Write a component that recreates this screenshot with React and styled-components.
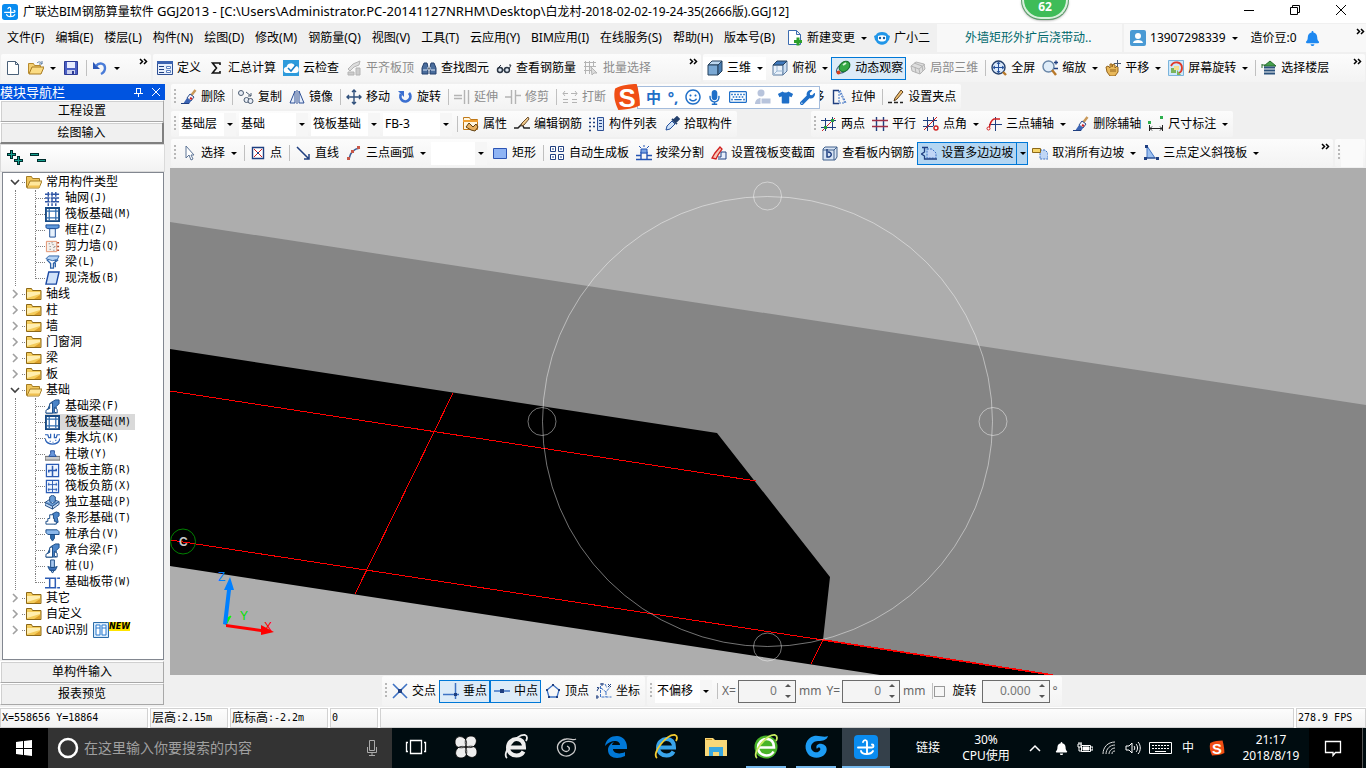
import React from "react";
import styled, { createGlobalStyle, css } from "styled-components";
import {
  FaRegSmile,
  FaMicrophone,
  FaRegKeyboard,
  FaTshirt,
  FaWrench,
  FaBell,
} from "react-icons/fa";

const NAVY = "#1f3f80";
const BLUE = "#3f73c4";
const RED = "#d02020";
const GREY = "#b4b4b4";

/* 16x16 toolbar and tree drawings */
const drawings = {
  doc: (
    <path d="M2.5 1.5h8l3 3v10h-11zM10.5 1.5v3h3" fill="#fff" stroke="#4a6078" />
  ),
  open: (
    <>
      <path d="M.5 13.5v-10h5l1 2h6v3" fill="#f3cf72" stroke="#b88a2c" />
      <path d="M1 14l3-7h12l-3 7z" fill="#fbdc84" stroke="#a87a20" />
      <path d="M9 3c2-2 4-1 5 1m0-3v3h-3" fill="none" stroke="#5b7ba0" />
    </>
  ),
  openFolder: (
    <>
      <path d="M.5 13.5v-11h5l1 2h7v3" fill="#f0c65c" stroke="#a47c24" />
      <path d="M1 14l3-7h12l-3 7z" fill="#ffe79c" stroke="#a47c24" />
      <path d="M2 13.5l1-2h11l-1 2z" fill="#f0c050" />
    </>
  ),
  save: (
    <>
      <path d="M1.5 1.5h13v13h-13z" fill="#4a5fc4" stroke="#2c3a94" />
      <path d="M4 2h8v6H4z" fill="#e8ecff" />
      <path d="M4 10h8v4H4z" fill="#c9d0ee" />
      <path d="M9 11h2v3H9z" fill="#2c3a94" />
    </>
  ),
  undo: (
    <>
      <path d="M1 2v7h7z" fill="#2c58b8" />
      <path d="M4 6c3-4 9-3 9 2 0 3-2 5-4 6" fill="none" stroke="#4a7cd8" strokeWidth="2.4" />
    </>
  ),
  define: (
    <>
      <path d="M.5 1.5h15v13H.5z" fill="#e6eefb" stroke="#2d4f94" />
      <path d="M0 1h16v3H0z" fill="#3c63b0" />
      <path d="M2 6.5h5M2 9.5h5M2 12.5h5" stroke={NAVY} />
      <path d="M9.5 6.5h4v2h-4zM9.5 10.5h4v2h-4z" fill="#fff" stroke="#5c80c0" />
    </>
  ),
  sigma: (
    <path d="M12 5V3H4.5l4 5-4 5H12v-2" fill="none" stroke="#111" strokeWidth="1.6" />
  ),
  cloud: (
    <>
      <path d="M0 0h16v16H0z" fill="#2e9bdc" />
      <path d="M4 13a3 3 0 0 1-.5-6A4.5 4.5 0 0 1 12 6a3.5 3.5 0 0 1 .5 7z" fill="#fff" />
      <path d="M5 8l3 3 5-6" fill="none" stroke="#1b80c8" strokeWidth="1.6" />
    </>
  ),
  flush: (
    <>
      <path d="M2 9l5-5 7-3-1 4-5 2-4 4z" fill="#ddd" stroke={GREY} />
      <path d="M2 12h6v3H2zM10 8h4v7h-4z" fill="#ccc" stroke={GREY} />
    </>
  ),
  binocular: (
    <>
      <path d="M1 14V8l2-5h3l1 4v7H1zM15 14V8l-2-5h-3L9 7v7h6z" fill="#4a6d9c" stroke="#24406c" />
      <path d="M7 7h2v3H7zM2 10h4m4 0h4" stroke="#dce8f8" />
    </>
  ),
  glasses: (
    <>
      <circle cx="4" cy="10" r="2.5" fill="#dce6f0" stroke="#2a3442" strokeWidth="1.5" />
      <circle cx="11" cy="10" r="2.5" fill="#dce6f0" stroke="#2a3442" strokeWidth="1.5" />
      <path d="M6.5 10h2M13 9l2-4h-2M2 8l3-3" fill="none" stroke="#2a3442" />
    </>
  ),
  batch: (
    <>
      <path d="M1 2.5h12M1 6.5h12M1 10.5h7M2.5 1v13M6.5 1v13M10.5 1v5" stroke={GREY} />
      <path d="M8 7l6 6h-3l-2 2z" fill="#ddd" stroke={GREY} />
    </>
  ),
  cube: (
    <>
      <path d="M1 5l4-4h10l-4 4z" fill="#bcd7f0" stroke="#24405c" />
      <path d="M1 5h10v10H1z" fill="#7ba9d4" stroke="#24405c" />
      <path d="M11 5l4-4v10l-4 4z" fill="#4a7db0" stroke="#24405c" />
    </>
  ),
  cubeTop: (
    <>
      <path d="M1 5h10v10H1z" fill="#e9f1fa" stroke="#5b7ba0" />
      <path d="M11 5l4-4v10l-4 4z" fill="#cfe0f2" stroke="#5b7ba0" />
      <path d="M5 5v6h6M1 15l4-4" fill="none" stroke="#9cb8d4" />
      <path d="M1 5l4-4h10l-4 4z" fill="#3f78bc" stroke="#24405c" />
    </>
  ),
  orbit: (
    <>
      <ellipse cx="8" cy="8" rx="7.5" ry="4" transform="rotate(-35 8 8)" fill="none" stroke="#3a5d80" />
      <ellipse cx="9.5" cy="6.5" rx="6" ry="4.5" transform="rotate(-40 9.5 6.5)" fill="#35a845" stroke="#16702a" />
      <path d="M8 5l3-2" stroke="#d4f5d4" strokeWidth="2" />
      <circle cx="3.5" cy="12.5" r="2" fill="#d24020" />
    </>
  ),
  cubes: (
    <>
      <path d="M1 6l5-4 8 2 1 5-5 5-8-3z" fill="#dedede" stroke={GREY} />
      <path d="M1 6l8 3 6-5M9 9l1 5M5 7l1 6M4 3l8 3 1 5" fill="none" stroke={GREY} />
    </>
  ),
  fullscreen: (
    <>
      <circle cx="7.5" cy="7.5" r="6.5" fill="#dceafa" stroke="#24406c" strokeWidth="1.4" />
      <path d="M7.5 2.5v10M2.5 7.5h10M6 4l1.5-2L9 4M6 11l1.5 2L9 11M4 6L2 7.5 4 9M11 6l2 1.5L11 9" fill="none" stroke="#24509c" />
      <path d="M12 12l3 3" stroke="#b87828" strokeWidth="2.4" />
    </>
  ),
  zoom: (
    <>
      <circle cx="6.5" cy="6.5" r="5.5" fill="#dfecf8" stroke="#6a87a8" strokeWidth="1.4" />
      <path d="M10 10l4 5" stroke="#b87828" strokeWidth="2.4" />
      <path d="M12 2.5h4M14 .5v4M12 8.5h4" stroke={NAVY} strokeWidth="1.3" />
    </>
  ),
  pan: (
    <>
      <path d="M1 7l2-1 2 2V4h2v3l1-3 2 1v3l2-2 1 1v5l-3 4H5l-3-4z" fill="#e8b85a" stroke="#94641c" />
      <path d="M12.5 0v7M9 3.5h7" stroke="#4a5a70" />
      <path d="M6 9v3m2-3v3m2-3v3" stroke="#94641c" />
    </>
  ),
  screenRotate: (
    <>
      <path d="M.5 .5h15v15H.5z" fill="#cfe8fa" stroke="#7ab4dc" />
      <path d="M3 6c3-6 11-4 11 2 0 2-1 4-3 5" fill="none" stroke="#e03a28" strokeWidth="1.8" />
      <path d="M3 8h5v5H3zM9 10v5h4z" fill="#7cb45a" />
      <path d="M6 6h5v4H6z" fill="#f5e08c" />
    </>
  ),
  floors: (
    <>
      <path d="M3 6L9 1l6 5z" fill="#46a04c" stroke="#246c2c" />
      <path d="M3 7.5h11M3 10.5h11M3 13.5h11" stroke="#2b527c" strokeWidth="1.8" />
      <path d="M1 5h3M1 4v4" fill="none" stroke="#246c2c" />
    </>
  ),
  brush: (
    <>
      <path d="M14.5 1L9 8" stroke="#c89858" strokeWidth="2.5" />
      <path d="M9 5l4 3-3 4-4-3z" fill="#f4f4fa" stroke="#2b4c8c" />
      <path d="M6 9l4 3-2 3H2z" fill="#3b64b4" />
      <path d="M9 9l2 1" stroke={RED} strokeWidth="2" />
      <path d="M0 14.5h8" stroke={NAVY} />
    </>
  ),
  copy: (
    <>
      <circle cx="3" cy="4" r="2.5" fill="#e8edf5" stroke="#4a5a70" />
      <circle cx="8.5" cy="11" r="2.5" fill="#e8edf5" stroke="#4a5a70" />
      <circle cx="12.5" cy="12" r="2.5" fill="#e8edf5" stroke="#4a5a70" />
      <path d="M8 3l5 4m0-3v3h-3" fill="none" stroke="#4a5a70" />
    </>
  ),
  mirror: (
    <path d="M6 2v12H1zM10 2v12h5zM8 1v14" fill="#e6eefb" stroke="#2d4f94" />
  ),
  move: (
    <path
      d="M8 1v14M1 8h14M6 3l2-2 2 2M6 13l2 2 2-2M3 6L1 8l2 2M13 6l2 2-2 2"
      fill="none"
      stroke="#31517c"
      strokeWidth="1.4"
    />
  ),
  rotate: (
    <>
      <path d="M4 5a5 5 0 1 0 8-1" fill="none" stroke="#3b6fd0" strokeWidth="2.8" />
      <path d="M1 2h6v6z" fill="#3b6fd0" />
    </>
  ),
  extend: (
    <path d="M0 6.5h8M0 9.5h8M10.5 1v14M14.5 1v14" stroke={GREY} strokeWidth="1.4" />
  ),
  trim: (
    <path d="M0 8h6M6.5 1v14M10.5 1v14M11 6.5h5" stroke={GREY} strokeWidth="1.4" />
  ),
  breakLine: (
    <path d="M1 4.5h5m3 0h6M3 2L1 4.5 3 7M13 2l2 2.5L13 7M1 10.5h5m4 0h5M1 13.5h5m4 0h5" fill="none" stroke={GREY} />
  ),
  stretch: (
    <>
      <path d="M8 1.5H2.5v13H8" fill="none" stroke={NAVY} strokeWidth="1.4" />
      <path d="M8 2v12h6zM9 1l6 13" fill="none" stroke={BLUE} strokeDasharray="2 1" />
    </>
  ),
  grip: (
    <>
      <path d="M13 1L7 9l-1 3 3-2 6-7z" fill="#f0c070" stroke="#5c4020" />
      <path d="M0 13.5h4m2 0h4m2 0h3" stroke="#222" strokeWidth="1.5" />
    </>
  ),
  property: (
    <>
      <path d="M.5 3.5v-2h6l1 2h7v10H.5z" fill="#fff6e0" stroke="#c07818" />
      <path d="M0 4h15v2H0z" fill="#f0a030" />
      <path d="M3 11l3-4 4 4 3-3 2 3-3 4-4-1z" fill="#e8b060" stroke="#604010" />
    </>
  ),
  editBar: (
    <>
      <path d="M0 12h4l4-4 2 4h6" fill="none" stroke="#222" strokeWidth="1.5" />
      <path d="M14 1L8 7l-1 3 3-1 5-6z" fill="#f0c888" stroke="#6c5030" />
    </>
  ),
  list: (
    <>
      <path d="M0 2.5h2M0 6.5h2M0 10.5h2M0 14.5h2M4 2.5h2M4 6.5h2M4 10.5h2" stroke={NAVY} strokeWidth="1.4" />
      <path d="M8.5 1.5h6v13h-6z" fill="#d4e2f6" stroke="#2d4f94" />
      <path d="M10 4.5h3M10 7.5h3M10 10.5h3" stroke={NAVY} />
    </>
  ),
  dropper: (
    <>
      <path d="M2 14l1-4 5-5 3 3-5 5z" fill="#cfe2f8" stroke="#24509c" />
      <path d="M8 3l5 5M10 4l3-3 2 2-3 3z" fill="#24406c" stroke="#24406c" strokeWidth="1.8" />
    </>
  ),
  twoPoint: (
    <>
      <path d="M4.5 2v13M11.5 1v13M0 4.5h15M0 11.5h15" stroke={NAVY} />
      <path d="M1 15L14 2" stroke={RED} />
      <path d="M10 3h3v3h-3zM3 10h3v3H3z" fill="#2c9a3c" />
    </>
  ),
  parallel: (
    <>
      <path d="M4.5 1v14M11.5 1v14" stroke={NAVY} strokeWidth="1.4" />
      <path d="M0 4.5h16M0 10.5h16" stroke="#a03048" strokeWidth="1.4" />
    </>
  ),
  pointAngle: (
    <>
      <path d="M4.5 1v14M10.5 1v9M0 4.5h14M0 10.5h10" stroke={NAVY} />
      <path d="M1 14L14 1" stroke={RED} />
      <circle cx="13" cy="12" r="2" fill="none" stroke={RED} strokeWidth="1.4" />
    </>
  ),
  threeAxis: (
    <>
      <path d="M9.5 1v14M3 8.5h13" stroke={NAVY} />
      <path d="M14 3H8C5 4 4 7 3 13" fill="none" stroke={RED} strokeWidth="1.4" />
      <circle cx="2.5" cy="12.5" r="1.5" fill="#fff" stroke={RED} />
    </>
  ),
  dimension: (
    <>
      <path d="M1.5 9v6M14.5 9v6M2 12.5h12M4 10.5l-2 2 2 2M12 10.5l2 2-2 2" fill="none" stroke="#222" />
      <path d="M0 5h3v3H0zM12 0h3v3h-3z" fill="#2cae4c" />
    </>
  ),
  cursor: (
    <path d="M5 1v12l3-3 2 5 2-1-2-4h3z" fill="#fff" stroke="#5c7496" />
  ),
  point: (
    <>
      <path d="M2.5 2.5h11v11h-11z" fill="#fff" stroke={NAVY} strokeWidth="1.4" />
      <path d="M4 4l8 8M12 4l-8 8" stroke={RED} />
      <path d="M7 7h2v2H7z" fill={NAVY} />
    </>
  ),
  line: (
    <path d="M2 2l12 12M14 9v5H9" fill="none" stroke={NAVY} strokeWidth="1.5" />
  ),
  arc: (
    <>
      <path d="M3 14C4 8 7 4 14 3" fill="none" stroke="#3c5c94" strokeWidth="1.6" />
      <path d="M1 12h3v3H1zM5 5h3v3H5zM11 1h3v3h-3z" fill="#c85848" />
    </>
  ),
  rect: <path d="M1.5 3.5h13v10h-13z" fill="#8fb4f4" stroke="#2c54b4" />,
  autoSlab: (
    <path d="M1.5 1.5h5v5h-5zM9.5 1.5h5v5h-5zM1.5 9.5h5v5h-5zM9.5 9.5h5v5h-5zM4 3v2m8-2v2m-8 6v2m8-2v2" fill="#fff" stroke={NAVY} />
  ),
  splitBeam: (
    <>
      <path d="M0 10.5h5v-3h6v3h5M0 14.5h16M5 8v6M11 8v6" fill="none" stroke="#2454b4" strokeWidth="1.4" />
      <path d="M5 4h6v4H5z" fill="#7ba4e4" stroke="#2454b4" />
      <path d="M8 0v2M3 1l2 2m8-2l-2 2" stroke="#2454b4" />
    </>
  ),
  section: (
    <>
      <path d="M1 13l3-5 5-6 2 2-4 6-2 4z" fill="#f8c8b8" stroke={RED} strokeWidth="1.3" />
      <path d="M7 12h3V7h5v7H7" fill="#e6eefb" stroke={NAVY} />
    </>
  ),
  viewBar: (
    <>
      <path d="M3 2h12v10l-2 3H1V4z" fill="#d8e4f4" stroke="#40608c" />
      <path d="M1 5h11v10M12 5l3-3" fill="none" stroke="#40608c" />
      <path d="M5 4v8c5 1 6-5 1-5" fill="none" stroke={NAVY} strokeWidth="1.5" />
    </>
  ),
  slope: (
    <>
      <path d="M6 4h5l4 4v5H6z" fill="#c0d6f6" stroke={BLUE} strokeDasharray="2 1" />
      <path d="M1 2.5h6M3.5 3v4l-3 2 3 2v3H16" fill="none" stroke={NAVY} strokeWidth="1.3" />
    </>
  ),
  cancelSlope: (
    <>
      <path d="M8 5h5l3 3v6H8z" fill="#c0d6f6" stroke={BLUE} strokeDasharray="2 1" />
      <path d="M.5 3.5h8v4h-8z" fill="#f5d468" stroke="#8c6818" />
    </>
  ),
  inclined: (
    <>
      <path d="M4 1v12h8z" fill="#9cc0f0" stroke="#3f73c4" />
      <path d="M4 13h10" stroke={NAVY} />
      <path d="M2 0h3v3H2zM1 12h3v3H1zM13 12h3v3h-3z" fill={NAVY} />
    </>
  ),
  cross: (
    <>
      <path d="M1 1l14 14M15 1L1 15" stroke={BLUE} strokeWidth="1.6" />
      <path d="M6 6h4v4H6z" fill={NAVY} />
    </>
  ),
  perp: (
    <>
      <path d="M0 11.5h16M12.5 0v16" stroke={BLUE} strokeWidth="1.5" />
      <path d="M11 10h3v3h-3z" fill={NAVY} />
    </>
  ),
  mid: (
    <>
      <path d="M0 8h16" stroke={BLUE} strokeWidth="1.5" />
      <path d="M6 6h4v4H6z" fill={NAVY} />
    </>
  ),
  vertex: (
    <>
      <path d="M8 2l6 5-2 7H4L2 7z" fill="none" stroke={BLUE} strokeWidth="1.3" />
      <path d="M7 1h2v2H7zM13 6h2v2h-2zM1 6h2v2H1zM3 13h2v2H3zM11 13h2v2h-2z" fill={NAVY} />
    </>
  ),
  coord: (
    <>
      <path d="M4.5 3v11h11M5 5l5 4 4-5M10 9v5M9 1l2 4" fill="none" stroke={BLUE} strokeDasharray="3 1" />
      <path d="M1 4l2 2m0-2L1 8M12 1l3 3m0-3l-3 3M0 13h2v2H0zM5 0h2v2H5z" fill="none" stroke={NAVY} />
    </>
  ),
  newChange: (
    <>
      <path d="M1.5 .5h8l4 4v10h-12zM9.5 .5v4h4" fill="#fff" stroke="#3c6cb0" />
      <path d="M7 11.5h8M11 7.5v8" stroke="#2ca02c" strokeWidth="3" />
    </>
  ),
  robot: (
    <>
      <path d="M0 6l2-1C3 1 13 1 14 5l2 1-1 4-1 1c-2 5-10 5-12 0L1 10z" fill="#2196e8" />
      <path d="M4 6c2-1 6-1 8 0v4c-2 2-6 2-8 0z" fill="#fff" />
      <circle cx="6" cy="8" r="1.2" fill="#165c9c" />
      <circle cx="10" cy="8" r="1.2" fill="#165c9c" />
    </>
  ),
  avatar: (
    <>
      <rect width="16" height="16" rx="2" fill="#4a9ad4" />
      <circle cx="8" cy="6" r="3" fill="#fff" />
      <path d="M3 13c0-4 10-4 10 0z" fill="#fff" />
    </>
  ),
  folder: (
    <>
      <path d="M.5 13.5v-11h5l1 2H15v9z" fill="#f4cc5c" stroke="#8c6818" />
      <path d="M1 6h13v2L1 12z" fill="#ffeeb0" />
      <path d="M8 13l6-4v4z" fill="#dca02c" />
    </>
  ),
  grid: (
    <path d="M0 3.5h15M0 7.5h15M0 11.5h15M3.5 1v15M7.5 1v15M11.5 1v15" stroke="#2f55a4" strokeWidth="1.5" strokeDasharray="5 1" />
  ),
  raft: (
    <>
      <path d="M1 1h14v14H1z" fill="#fff" stroke="#174a84" strokeWidth="2" />
      <path d="M4.5 2v12M11.5 2v12M2 4.5h12M2 11.5h12" stroke="#2f6cae" strokeWidth="1.3" />
    </>
  ),
  column: (
    <>
      <path d="M1 2h14v3l-3 1H3L1 5z" fill="#5e98dc" stroke="#174a94" />
      <path d="M5 6h6v9H5z" fill="#e8f2fc" stroke="#174a94" />
    </>
  ),
  wall: (
    <>
      <path d="M1.5 2.5h11v11h-11z" fill="#f4f0ec" stroke="#e0906c" />
      <path d="M4 5h1m3 1h1M5 8h1m3 1h1M5 11h1m3 1h1M7 4h1m2 4h1" stroke="#666" />
      <path d="M13 4h2m-2 4h2m-2 4h2" stroke="#b04828" strokeWidth="1.5" />
    </>
  ),
  beam: (
    <>
      <path d="M1 4l3-3h11l-2 4-5 1z" fill="#b8d4f4" stroke="#2c62a8" />
      <path d="M2 5l4 4v5h3V9l5-4M11 5v8" fill="none" stroke="#2c62a8" strokeWidth="1.4" />
    </>
  ),
  slab: (
    <path d="M4 1h11l-3 13H1z" fill="#d0e2fa" stroke="#1c4aa4" strokeWidth="1.5" />
  ),
  footBeam: (
    <>
      <path d="M6 4l5-3h4v4l-3 3v7H1z" fill="#4a84c8" stroke="#174a84" />
      <path d="M1 15v-3l4-2V5l3-1v11zM10 9v5l3 1v-4z" fill="#fff" stroke="#174a84" />
    </>
  ),
  sump: (
    <path d="M0 4h3l1 3h2V3m10 1h-3l-1 3h-2V3M0 8c2 8 14 8 16 0M5 11h1m2 1h1m2-2h1" fill="none" stroke="#2c62b8" strokeWidth="1.3" />
  ),
  pier: (
    <>
      <path d="M0 10h16v4H0z" fill="#ccc" stroke="#666" />
      <path d="M4 10l2-3V4h4v3l2 3z" fill="#6a98dc" stroke="#24509c" />
    </>
  ),
  mainBar: (
    <>
      <path d="M1.5 1.5h13v13h-13z" fill="#eef4fd" stroke="#2c5cb4" strokeWidth="1.3" />
      <path d="M8 3v11M4 10V8h8V6" fill="none" stroke="#2c5cb4" strokeWidth="1.6" />
    </>
  ),
  negBar: (
    <>
      <path d="M1.5 1.5h13v13h-13z" fill="#eef4fd" stroke="#2c5cb4" strokeWidth="1.3" />
      <path d="M8 2v12M3 6h10M3 11h10M4 4v3m8-3v3m-8 3v3m8-3v3" fill="none" stroke="#2c5cb4" />
    </>
  ),
  isoFoot: (
    <>
      <path d="M0 8l6-4 9 3v3l-7 5-8-4z" fill="#c4daf4" stroke="#1f4a80" />
      <path d="M0 8l8 4 7-5M8 12v3M5 2l3-2 3 2v5L8 9 5 7z" fill="#6a9cd4" stroke="#1f4a80" />
    </>
  ),
  strip: (
    <>
      <path d="M8 3l4-2 3 1v3l-2 2 1 5-4 2z" fill="#4a84c8" stroke="#174a84" />
      <path d="M1 14v-3h2V8h2V4h4v4h1v3h2v3z" fill="#fff" stroke="#174a84" />
    </>
  ),
  cap: (
    <>
      <path d="M1 3h12l2 2v3H3L1 6z" fill="#8cb8ea" stroke="#174a84" />
      <path d="M6 8h4v4l-2 3-2-3z" fill="#2f6cae" stroke="#174a84" />
    </>
  ),
  pile: (
    <>
      <path d="M6 1h4v8H6zM6 12h4l-2 3z" fill="#a8c8f0" stroke="#174a84" />
      <path d="M3 8l3 1h4l3-1-2 4H5z" fill="#3c70b8" stroke="#174a84" />
    </>
  ),
  band: (
    <path d="M0 3.5h16M0 13.5h16M5 4v9M11 4v9" stroke="#2c5cb4" strokeWidth="1.6" strokeDasharray="12 1" />
  ),
  cad: (
    <>
      <path d="M.5 .5h15v15H.5z" fill="#d8eafa" stroke="#2c6ca8" />
      <path d="M3 3h4v10H3zM9 3h4v10H9zM3 6h4m2 0h4" fill="#fff" stroke="#2c7cd0" />
    </>
  ),
};

const Icon = ({ name, size = 16 }) => (
  <Glyph width={size} height={size} viewBox="0 0 16 16" aria-hidden="true">
    {drawings[name]}
  </Glyph>
);

const More = () => (
  <MoreButton aria-label="更多">
    <svg width="9" height="7" viewBox="0 0 9 7">
      <path d="M1 1l2.5 2.5L1 6M5 1l2.5 2.5L5 6" fill="none" stroke="#000" strokeWidth="1.5" />
    </svg>
  </MoreButton>
);

const Tool = ({ icon, label, title, arrow, active, disabled, boxed }) => (
  <Split $active={active} $boxed={boxed}>
    <ToolButton disabled={disabled} aria-label={label || title}>
      <Icon name={icon} />
      {label}
    </ToolButton>
    {arrow && <ArrowButton aria-label={`${label || title}选项`} $line={active} />}
  </Split>
);

const Combo = ({ label, value, width }) => (
  <ComboBox $width={width}>
    <select aria-label={label} defaultValue={value}>
      <option>{value}</option>
    </select>
  </ComboBox>
);

const Spin = ({ id, value, wide }) => (
  <SpinBox $wide={wide}>
    <input id={id} defaultValue={value} />
    <span>
      <button aria-label="增加">
        <i />
      </button>
      <button aria-label="减少">
        <i />
      </button>
    </span>
  </SpinBox>
);

const menus = [
  "文件(F)", "编辑(E)", "楼层(L)", "构件(N)", "绘图(D)", "修改(M)", "钢筋量(Q)",
  "视图(V)", "工具(T)", "云应用(Y)", "BIM应用(I)", "在线服务(S)", "帮助(H)", "版本号(B)",
];

const tree = [
  {
    name: "常用构件类型",
    items: [
      ["grid", "轴网", "(J)"],
      ["raft", "筏板基础", "(M)"],
      ["column", "框柱", "(Z)"],
      ["wall", "剪力墙", "(Q)"],
      ["beam", "梁", "(L)"],
      ["slab", "现浇板", "(B)"],
    ],
  },
  { name: "轴线" },
  { name: "柱" },
  { name: "墙" },
  { name: "门窗洞" },
  { name: "梁" },
  { name: "板" },
  {
    name: "基础",
    items: [
      ["footBeam", "基础梁", "(F)"],
      ["raft", "筏板基础", "(M)", true],
      ["sump", "集水坑", "(K)"],
      ["pier", "柱墩", "(Y)"],
      ["mainBar", "筏板主筋", "(R)"],
      ["negBar", "筏板负筋", "(X)"],
      ["isoFoot", "独立基础", "(P)"],
      ["strip", "条形基础", "(T)"],
      ["cap", "桩承台", "(V)"],
      ["footBeam", "承台梁", "(F)"],
      ["pile", "桩", "(U)"],
      ["band", "基础板带", "(W)"],
    ],
  },
  { name: "其它" },
  { name: "自定义" },
  { name: "识别", prefix: "CAD", isNew: true },
];

const TreeNode = ({ node }) => (
  <li>
    <Branch>
      <svg width="12" height="12" viewBox="0 0 12 12">
        <path
          d={node.items ? "M2 4l4 4 4-4" : "M4 2l4 4-4 4"}
          fill="none"
          stroke={node.items ? "#404040" : "#a0a0a0"}
          strokeWidth="1.6"
        />
      </svg>
      <Dots />
      <Icon name={node.items ? "openFolder" : "folder"} />
      <Caption>
        {node.prefix && <Mono>{node.prefix}</Mono>}
        {node.name}
      </Caption>
      {node.isNew && (
        <>
          <Icon name="cad" />
          <NewTag>NEW</NewTag>
        </>
      )}
    </Branch>
    {node.items && (
      <Leaves>
        {node.items.map(([icon, name, key, selected]) => (
          <Leaf key={name} $selected={selected}>
            <Stem />
            <span>
              <Icon name={icon} size={15} />
              {name}
              <Mono>{key}</Mono>
            </span>
          </Leaf>
        ))}
      </Leaves>
    )}
  </li>
);

const Scene = () => (
  <Canvas viewBox="170 168 1196 507" preserveAspectRatio="xMidYMid slice">
    <path d="M170 168h1196v507H170z" fill="#adadad" />
    <path d="M170 222L1366 405V675H1053L170 566z" fill="#858585" />
    <path d="M170 349L717 433 830 577 823 640 1053 675H880L170 566z" fill="#000" />
    <g fill="none" stroke="#f00" shapeRendering="crispEdges">
      <path d="M170 391L756 481M453 393L355 594M170 540L823 640M823 640L811 664" />
      <path d="M823 640L1053 675" strokeWidth="1.6" />
    </g>
    <g fill="none" stroke="#fff" strokeOpacity="0.45">
      <circle cx="767.5" cy="421.5" r="225" />
      <circle cx="767.5" cy="196" r="14" />
      <circle cx="767.5" cy="647" r="14" />
      <circle cx="542" cy="421.5" r="14" />
      <circle cx="993" cy="421.5" r="14" />
    </g>
    <circle cx="183" cy="541.5" r="12.5" fill="none" stroke="#008000" />
    <AxisText x="179" y="546" fill="#c8c8c8" $bold>C</AxisText>
    <path d="M226 625l5-9-4 2z" fill="#0f0" stroke="#0f0" />
    <path d="M223 624l4-34h-3l6-13 4 13h-3l-4 35z" fill="#0080ff" />
    <path d="M226 624l35 5v-4l13 7-13 3v-3l-35-5z" fill="#f00" />
    <AxisText x="218" y="581" fill="#0080ff">Z</AxisText>
    <AxisText x="240" y="620" fill="#00e000">Y</AxisText>
    <AxisText x="264" y="631" fill="#f00">X</AxisText>
  </Canvas>
);

const GldLogo = ({ size }) => (
  <svg width={size} height={size} viewBox="0 0 24 24">
    <rect width="24" height="24" rx="4" fill="#0a8cf0" />
    <path
      d="M9 7c1-3 4-2 4 0v11M4 12.5h14c2 0 2-3 0-3M7 16c1 4 10 4 12 0"
      fill="none"
      stroke="#fff"
      strokeWidth="1.9"
      strokeLinecap="round"
    />
  </svg>
);

const SogouLogo = ({ size }) => (
  <svg width={size} height={size} viewBox="0 0 26 26">
    <path d="M2 5c6-3 14-4 20-4 2 7 3 14 3 20-6 3-13 4-20 4C2 19 0 12 2 5z" fill="#f04e14" />
    <SogouText x="13" y="22" textAnchor="middle">S</SogouText>
  </svg>
);

const ELogo = ({ color, ring, disc }) => (
  <svg width="26" height="26" viewBox="0 0 26 26">
    {disc && <circle cx="13" cy="13" r="11.5" fill={disc} />}
    <path
      d="M6 13.5h15c0-6-3-8.5-7.5-8.5S5 8.500 5 13.500 9 21.500 13.500 21.500c3 0 5.500-1 7-4"
      fill="none"
      stroke={color}
      strokeWidth={disc ? 2.6 : 4}
    />
    {ring && (
      <path d="M4 24C-2 19 14 0 22 1c3 1 2 4 1 6" fill="none" stroke={ring} strokeWidth="1.8" />
    )}
  </svg>
);

const taskApps = [
  {
    name: "任务视图",
    art: (
      <svg width="24" height="24" viewBox="0 0 24 24" fill="none" stroke="#fff">
        <path d="M6.5 5.5h11v13h-11zM4 7.5H2.5v9H4M20 7.5h1.5v9H20" strokeWidth="1.3" />
      </svg>
    ),
  },
  {
    name: "风车",
    art: (
      <svg width="24" height="24" viewBox="0 0 24 24" fill="#eee" stroke="#000" strokeWidth="0.8">
        <path d="M12 12C5 14 1 12 1 7s5-7 9-4c3 2 3 6 2 9zM12 12C10 5 12 1 17 1s7 5 4 9c-2 3-6 3-9 2zM12 12c7-2 11 0 11 5s-5 7-9 4c-3-2-3-6-2-9zM12 12c2 7 0 11-5 11s-7-5-4-9c2-3 6-3 9-2z" />
      </svg>
    ),
  },
  { name: "浏览器", art: <ELogo color="#eee" ring="#eee" /> },
  {
    name: "旋风",
    art: (
      <svg width="24" height="24" viewBox="0 0 24 24" fill="none" stroke="#ccc" strokeWidth="1.3">
        <path d="M22 4c-3 2-5-1-10 0C6 5 2 10 4 15c2 6 9 8 14 4 3-2 4-5 3-9-2-5-12-5-13 1-1 5 5 7 7 4 1-2 0-3-2-4" />
      </svg>
    ),
  },
  {
    name: "Edge",
    art: (
      <svg width="24" height="24" viewBox="0 0 24 24">
        <path d="M1 11C2 4 7 1 13 1c6 0 10 5 10 11v2H9c0 4 6 6 12 3v4c-8 4-17 2-17-6 0-4 3-7 6-8-1 1-2 2-2 3h8c0-5-9-6-15 1z" fill="#0078d7" />
      </svg>
    ),
  },
  { name: "Internet Explorer", art: <ELogo color="#39a4ea" ring="#f4cc30" /> },
  {
    name: "文件资源管理器",
    art: (
      <svg width="24" height="24" viewBox="0 0 24 24">
        <path d="M1 3h8l2 2h12v16H1z" fill="#f8d878" />
        <path d="M2 4h6v1H2z" fill="#c89020" />
        <path d="M5 21v-9h14v9h-4v-4H9v4z" fill="#38a8e0" />
      </svg>
    ),
  },
  { name: "360浏览器", running: true, art: <ELogo color="#fff" ring="#c8ec60" disc="#48b428" /> },
  {
    name: "广联达",
    running: true,
    art: (
      <svg width="26" height="26" viewBox="0 0 26 26">
        <path d="M25 2c-1 4-5 5-10 5-4 0-7 3-7 6 0 4 4 6 7 5 2-1 3-3 2-4-1-1-3 0-3 1-2-3 1-6 5-5 5 1 6 6 3 10-4 5-13 5-17 0C0 13 3 4 11 2c5-1 10 2 14 0z" fill="#1c9cf4" />
      </svg>
    ),
  },
  { name: "广联达BIM钢筋算量软件", running: true, current: true, art: <GldLogo size={24} /> },
];

const App = () => {
  return (
    <>
      <GlobalStyle />
      <Window>
        <TitleBar>
          <GldLogo size={16} />
          <h1>
            广联达BIM钢筋算量软件{" "}
            <span>GGJ2013 - [C:\Users\Administrator.PC-20141127NRHM\Desktop\</span>
            白龙村-2018-02-02-19-24-35(2666版).GGJ12]
          </h1>
          <button aria-label="最小化">
            <svg width="12" height="12" stroke="#000"><path d="M1 6.5h10" /></svg>
          </button>
          <button aria-label="还原">
            <svg width="12" height="12" stroke="#000" fill="none"><path d="M1.5 3.5h7v7h-7zM3.5 3V1.5h7v7H9" /></svg>
          </button>
          <button aria-label="关闭">
            <svg width="12" height="12" stroke="#000"><path d="M1 1l10 10M11 1L1 11" /></svg>
          </button>
          <Badge>62</Badge>
        </TitleBar>

        <MenuBar>
          <nav>
            {menus.map((m) => (
              <a href="#menu" key={m}>{m}</a>
            ))}
          </nav>
          <Tool icon="newChange" label="新建变更" arrow />
          <Tool icon="robot" label="广小二" />
          <News href="#news">外墙矩形外扩后浇带动..</News>
          <Account>
            <Tool icon="avatar" label="13907298339" arrow />
            <span>造价豆:0</span>
            <FaBell size={15} color="#1e88f0" />
            <More />
          </Account>
        </MenuBar>

        <ToolRow $height={30}>
          <Bar>
            <Tool icon="doc" title="新建" />
            <Tool icon="open" title="打开" arrow />
            <Tool icon="save" title="保存" />
            <Sep />
            <Tool icon="undo" title="撤销" arrow />
            <MoreGap />
            <More />
          </Bar>
          <Bar>
            <Tool icon="define" label="定义" />
            <Tool icon="sigma" label="汇总计算" />
            <Tool icon="cloud" label="云检查" />
            <Tool icon="flush" label="平齐板顶" disabled />
            <Tool icon="binocular" label="查找图元" />
            <Tool icon="glasses" label="查看钢筋量" />
            <Tool icon="batch" label="批量选择" disabled />
            <MoreGap $wide />
            <More />
          </Bar>
          <Bar $grow>
            <Tool icon="cube" label="三维" arrow boxed />
            <Tool icon="cubeTop" label="俯视" arrow />
            <Tool icon="orbit" label="动态观察" active="light" />
            <Tool icon="cubes" label="局部三维" disabled />
            <Sep />
            <Tool icon="fullscreen" label="全屏" />
            <Tool icon="zoom" label="缩放" arrow />
            <Tool icon="pan" label="平移" arrow />
            <Tool icon="screenRotate" label="屏幕旋转" arrow />
            <Sep />
            <Tool icon="floors" label="选择楼层" />
            <More />
          </Bar>
        </ToolRow>

        <Main>
          <Sidebar>
            <PaneTitle>
              模块导航栏
              <span>
                <svg width="10" height="10" stroke="#fff" fill="none"><path d="M3.5 1v5M7.5 1v5M3 1.5h5M1 6.5h9M5.5 7v3" /></svg>
                <svg width="10" height="10" stroke="#fff"><path d="M1 1l8 8M9 1L1 9" /></svg>
              </span>
            </PaneTitle>
            <PaneButton>工程设置</PaneButton>
            <PaneButton $pressed>绘图输入</PaneButton>
            <TreeTools>
              <button aria-label="全部展开">
                <svg width="16" height="16"><path d="M4.5 0v9M0 4.5h9M11.5 6v9M7 10.5h9" stroke="#002c2c" strokeWidth="3" /><path d="M4.5 1v7M1 4.5h7M11.5 7v7M8 10.5h7" stroke="#16a090" /></svg>
              </button>
              <button aria-label="全部折叠">
                <svg width="17" height="16"><path d="M0 4.5h9M7 10.5h9" stroke="#002c2c" strokeWidth="3" /><path d="M1 4.5h7M8 10.5h7" stroke="#16a090" /></svg>
              </button>
            </TreeTools>
            <Tree>
              {tree.map((node) => (
                <TreeNode node={node} key={node.name} />
              ))}
            </Tree>
            <PaneButton>单构件输入</PaneButton>
            <PaneButton>报表预览</PaneButton>
          </Sidebar>

          <Work>
            <ToolRow $height={27}>
              <Bar>
                <Grip />
                <Tool icon="brush" label="删除" />
                <Sep />
                <Tool icon="copy" label="复制" />
                <Tool icon="mirror" label="镜像" />
                <Sep />
                <Tool icon="move" label="移动" />
                <Tool icon="rotate" label="旋转" />
                <Sep />
                <Tool icon="extend" label="延伸" disabled />
                <Tool icon="trim" label="修剪" disabled />
                <Sep />
                <Tool icon="breakLine" label="打断" disabled />
                <Covered />
                <Tool icon="copy" label="偏移" />
                <Tool icon="stretch" label="拉伸" />
                <Sep />
                <Tool icon="grip" label="设置夹点" />
              </Bar>
            </ToolRow>
            <ToolRow $height={28}>
              <Bar>
                <Grip />
                <Combo label="楼层" value="基础层" width={57} />
                <Combo label="构件类别" value="基础" width={69} />
                <Combo label="构件类型" value="筏板基础" width={69} />
                <Combo label="构件" value="FB-3" width={69} />
                <Sep />
                <Tool icon="property" label="属性" />
                <Tool icon="editBar" label="编辑钢筋" />
                <Tool icon="list" label="构件列表" />
                <Tool icon="dropper" label="拾取构件" />
              </Bar>
              <BarGap />
              <Bar>
                <Grip />
                <Tool icon="twoPoint" label="两点" />
                <Tool icon="parallel" label="平行" />
                <Tool icon="pointAngle" label="点角" arrow />
                <Tool icon="threeAxis" label="三点辅轴" arrow />
                <Tool icon="brush" label="删除辅轴" />
                <Tool icon="dimension" label="尺寸标注" arrow />
              </Bar>
            </ToolRow>
            <ToolRow $height={30}>
              <Bar $grow>
                <Grip />
                <Tool icon="cursor" label="选择" arrow />
                <Sep />
                <Tool icon="point" label="点" />
                <Sep />
                <Tool icon="line" label="直线" />
                <Tool icon="arc" label="三点画弧" arrow />
                <Combo label="画弧参数" value="" width={56} />
                <Tool icon="rect" label="矩形" />
                <Sep />
                <Tool icon="autoSlab" label="自动生成板" />
                <Tool icon="splitBeam" label="按梁分割" />
                <Tool icon="section" label="设置筏板变截面" />
                <Tool icon="viewBar" label="查看板内钢筋" />
                <Tool icon="slope" label="设置多边边坡" arrow active="strong" />
                <Tool icon="cancelSlope" label="取消所有边坡" arrow />
                <Tool icon="inclined" label="三点定义斜筏板" arrow />
                <More />
              </Bar>
              <Bar>
                <Grip />
                <Blank />
              </Bar>
            </ToolRow>

            <Scene />

            <ToolRow $height={32} $indent>
              <Bar>
                <Grip />
                <Tool icon="cross" label="交点" />
                <Tool icon="perp" label="垂点" active="light" />
                <Tool icon="mid" label="中点" active="light" />
                <Tool icon="vertex" label="顶点" />
                <Tool icon="coord" label="坐标" />
              </Bar>
              <Bar>
                <Grip />
                <Combo label="偏移方式" value="不偏移" width={57} />
                <Sep />
                <Unit htmlFor="dx">X=</Unit>
                <Spin id="dx" value="0" />
                <Unit as="span">mm</Unit>
                <Unit htmlFor="dy">Y=</Unit>
                <Spin id="dy" value="0" />
                <Unit as="span">mm</Unit>
                <Sep />
                <Check>
                  <input type="checkbox" />
                  旋转
                </Check>
                <Spin id="angle" value="0.000" wide />
                <Unit htmlFor="angle">°</Unit>
              </Bar>
            </ToolRow>
          </Work>
        </Main>

        <StatusBar>
          <Cell $width={148}><Mono>X=558656 Y=18864</Mono></Cell>
          <Cell $width={78}>层高<Mono>:2.15m</Mono></Cell>
          <Cell $width={98}>底标高<Mono>:-2.2m</Mono></Cell>
          <Cell $width={48}><Mono>0</Mono></Cell>
          <Cell />
          <Cell $width={70}><Mono>278.9 FPS</Mono></Cell>
        </StatusBar>

        <TaskBar>
          <Start aria-label="开始">
            <svg width="16" height="16" fill="#fff"><path d="M0 2l7-1v7H0zM8 1l8-1v8H8zM0 9h7v6l-7-1zM8 9h8v7l-8-1z" /></svg>
          </Start>
          <Search>
            <svg width="22" height="22"><circle cx="11" cy="11" r="9" fill="none" stroke="#fff" strokeWidth="2.5" /></svg>
            <input aria-label="搜索" placeholder="在这里输入你要搜索的内容" />
            <svg width="12" height="18" fill="none" stroke="#aaa"><path d="M3.5 1.5h5v10h-5zM1.5 8v5.5h9V8M6 14v3M3 16.5h6" /></svg>
          </Search>
          {taskApps.map((app) => (
            <TaskButton key={app.name} aria-label={app.name} $running={app.running} $current={app.current}>
              {app.art}
            </TaskButton>
          ))}
          <Tray>
            <TrayCell $width={46}>链接</TrayCell>
            <TrayCell $width={70}>
              30%
              <br />
              CPU使用
            </TrayCell>
            <TrayCell $width={28}>
              <svg width="12" height="12" fill="none" stroke="#fff"><path d="M1 9l5-5 5 5" strokeWidth="1.5" /></svg>
            </TrayCell>
            <TrayCell $width={24}><FaBell size={13} /></TrayCell>
            <TrayCell $width={24}>
              <svg width="16" height="14" fill="none" stroke="#fff"><path d="M4.5 4.5h9v6h-9zM14 6h2v3h-2M1 3h4M1 3v3h3V3M2 1v2m2-2v2M2 6v4h3" /><path d="M6 6h6v3H6z" fill="#fff" /></svg>
            </TrayCell>
            <TrayCell $width={24}>
              <svg width="14" height="14" fill="none" stroke="#ddd"><path d="M1 13C1 6 6 1 13 1M4 13c0-5 4-9 9-9M7 13c0-3 3-6 6-6M10 13c0-2 1-3 3-3" /></svg>
            </TrayCell>
            <TrayCell $width={24}>
              <svg width="17" height="14" fill="none" stroke="#fff"><path d="M1 5h3l3-3v10L4 9H1zM9 5c1 1 1 3 0 4M11 3c2 2 2 6 0 8M13 1c3 3 3 9 0 12" /></svg>
            </TrayCell>
            <TrayCell $width={30}>
              <svg width="23" height="14" fill="none" stroke="#fff"><path d="M.5 1.5h22v11H.5z" /><path d="M3 4.5h17M3 7.5h17" strokeDasharray="2 1" /><path d="M6 10.5h11" /></svg>
            </TrayCell>
            <TrayCell $width={26}>中</TrayCell>
            <TrayCell $width={32}><SogouLogo size={16} /></TrayCell>
            <TrayCell $width={76}>
              21:17
              <br />
              2018/8/19
            </TrayCell>
            <Notice aria-label="操作中心">
              <svg width="18" height="18" fill="none" stroke="#fff"><path d="M1.5 2.5h15v11h-5l-2.5 3v-3H1.5z" strokeWidth="1.3" /></svg>
            </Notice>
          </Tray>
        </TaskBar>

        <Ime>
          <SogouLogo size={28} />
          <div>
            <b>中</b>
            <b>°,</b>
            <FaRegSmile size={16} />
            <FaMicrophone size={15} />
            <FaRegKeyboard size={18} />
            <svg width="18" height="16" fill="#b8c4dc"><circle cx="7" cy="4" r="3.5" /><path d="M1 15c0-8 12-8 12 0z" /><path d="M7 9h10v6H7z" stroke="#fff" /></svg>
            <FaTshirt size={15} />
            <FaWrench size={15} />
          </div>
        </Ime>
      </Window>
    </>
  );
};
export default App;

const GlobalStyle = createGlobalStyle`
  * {
    box-sizing: border-box;
  }

  body {
    margin: 0;
    background: #f0f0f0;
    color: #000;
    font: 12px/16px "Noto Sans", "Noto Sans CJK SC", sans-serif;
  }

  button,
  input,
  select {
    font: inherit;
    color: inherit;
    border: 0;
    padding: 0;
    margin: 0;
    background: none;
    border-radius: 0;
  }

  a {
    color: inherit;
    text-decoration: none;
  }
`;

const Window = styled.div`
  position: relative;
  display: flex;
  flex-direction: column;
  height: 100vh;
  overflow: hidden;
  white-space: nowrap;
`;

const Glyph = styled.svg`
  flex: none;
  display: block;
`;

const TitleBar = styled.header`
  position: relative;
  flex: none;
  display: flex;
  align-items: center;
  height: 23px;
  padding: 0 2px;
  background: #fff;

  h1 {
    flex: 1;
    margin: 0 0 0 5px;
    font-size: 12px;
    font-weight: 400;
  }

  h1 span {
    font-size: 13px;
  }

  button {
    width: 46px;
    height: 20px;
  }
`;

const Badge = styled.div`
  position: absolute;
  top: 0;
  right: 298px;
  width: 46px;
  height: 19px;
  border: 2px solid #d8f0dc;
  border-top: 0;
  border-radius: 0 0 23px 23px;
  background: #3ebc58;
  box-shadow: 0 0 0 1px #5a9a68, 0 1px 3px #777;
  color: #fff;
  font-weight: 700;
  line-height: 14px;
  text-align: center;
`;

const MenuBar = styled.div`
  flex: none;
  display: flex;
  align-items: center;
  height: 30px;
  padding-left: 7px;

  nav {
    display: flex;
    gap: 11px;
    margin-right: 8px;
  }
`;

const News = styled.a`
  align-self: stretch;
  display: flex;
  align-items: center;
  width: 185px;
  margin: 1px 2px 1px 4px;
  padding-left: 28px;
  background: #f8f8f8;
  color: #00686c;
`;

const Account = styled.div`
  flex: 1;
  align-self: stretch;
  display: flex;
  align-items: center;
  margin: 1px 0;
  background: #f8f8f8;

  > span {
    margin: 0 8px 0 2px;
  }
`;

const ToolRow = styled.div`
  flex: none;
  display: flex;
  height: ${(p) => p.$height}px;
  padding: 1px 1px 1px ${(p) => (p.$indent ? 212 : 1)}px;
  gap: 2px;
`;

const Bar = styled.div`
  flex: ${(p) => (p.$grow ? "1" : "none")};
  display: flex;
  align-items: center;
  padding-right: 2px;
  background: linear-gradient(#fcfcfc, #f3f3f3);
  border-radius: 2px;
`;

const BarGap = styled.div`
  width: 70px;
`;

const Grip = styled.i`
  width: 2px;
  height: 16px;
  margin: 0 1px 0 3px;
  background: repeating-linear-gradient(#b8b8b8 0 2px, transparent 2px 4px);
`;

const Sep = styled.i`
  width: 1px;
  height: 16px;
  margin: 0 1px 0 4px;
  background: #c0c0c0;
`;

const MoreGap = styled.i`
  width: ${(p) => (p.$wide ? 33 : 14)}px;
`;

const Covered = styled.i`
  width: 167px;
`;

const MoreButton = styled.button`
  display: flex;
  justify-content: center;
  align-self: flex-start;
  margin-left: auto;
  padding-top: 4px;
  width: 12px;
`;

const Split = styled.span`
  display: flex;
  align-items: center;
  height: 23px;

  ${(p) =>
    p.$boxed &&
    css`
      margin-right: 2px;
      background: #fff;
    `}

  ${(p) =>
    p.$active &&
    css`
      background: ${p.$active === "strong" ? "#b4d6f2" : "#dcebf8"};
      box-shadow: inset 0 0 0 1px #0078d7;
    `}
`;

const ToolButton = styled.button`
  display: flex;
  align-items: center;
  gap: 4px;
  height: 100%;
  padding: 0 3px 0 4px;

  &:disabled {
    color: #8c8c8c;
  }
`;

const arrowMark = css`
  content: "";
  border: 3px solid transparent;
  border-top-color: #000;
  border-bottom: 0;
`;

const ArrowButton = styled.button`
  display: flex;
  align-items: center;
  justify-content: center;
  width: 12px;
  height: 100%;
  border-left: ${(p) => (p.$line ? "1px solid #0078d7" : "0")};

  &::after {
    ${arrowMark}
  }
`;

const ComboBox = styled.span`
  display: flex;
  align-items: center;
  justify-content: flex-end;
  width: ${(p) => p.$width}px;
  height: 23px;
  margin: 0 1px 0 2px;
  padding-right: 3px;
  background: linear-gradient(to right, #fff calc(100% - 12px), #f6f6f6 0);

  select {
    flex: 1;
    min-width: 0;
    height: 100%;
    padding-left: 2px;
    appearance: none;
  }

  &::after {
    ${arrowMark}
  }
`;

const Blank = styled.i`
  align-self: stretch;
  width: 22px;
  background: #fafafa;
`;

const Unit = styled.label`
  padding: 0 2px 0 3px;
  color: #666;
`;

const SpinBox = styled.span`
  display: flex;
  width: ${(p) => (p.$wide ? 68 : 58)}px;
  height: 23px;
  border: 1px solid #6c6c6c;
  background: #f4f4f4;
  color: #777;

  input {
    flex: 1;
    min-width: 0;
    text-align: right;
  }

  span {
    display: flex;
    flex-direction: column;
    width: 18px;
    padding-left: 4px;
  }

  button {
    display: flex;
    align-items: center;
    justify-content: center;
    height: 50%;
  }

  i {
    border: 3px solid transparent;
    border-bottom-color: #555;
    border-top: 0;
  }

  button:last-child i {
    transform: rotate(180deg);
  }
`;

const Check = styled.label`
  display: flex;
  align-items: center;
  gap: 8px;
  padding-right: 5px;

  input {
    appearance: none;
    width: 11px;
    height: 11px;
    border: 1px solid #999;
    background: #f6f6f6;
  }
`;

const Main = styled.main`
  flex: 1;
  min-height: 0;
  display: flex;
`;

const Sidebar = styled.aside`
  flex: none;
  display: flex;
  flex-direction: column;
  width: 166px;
  padding: 1px 1px 2px 0;
`;

const PaneTitle = styled.div`
  flex: none;
  display: flex;
  justify-content: space-between;
  align-items: center;
  height: 16px;
  padding-right: 4px;
  background: #0054e0;
  color: #fff;
  font-size: 13px;
  line-height: 16px;

  span {
    display: flex;
    gap: 8px;
  }
`;

const PaneButton = styled.button`
  flex: none;
  height: 22px;
  margin-right: 1px;
  border: 1px solid #a8a8a8;
  border-top-color: #fff;
  border-left-color: #fff;
  background: #f0f0f0;
  box-shadow: inset 1px 1px #d0d0d0;

  ${(p) =>
    p.$pressed &&
    css`
      border-right: 2px solid #808080;
      border-bottom: 2px solid #808080;
    `}
`;

const TreeTools = styled.div`
  flex: none;
  display: flex;
  align-items: center;
  gap: 7px;
  height: 28px;
  padding-left: 6px;
  border: 1px solid #dadada;
  background: linear-gradient(#fff, #f2f2f2);

  button,
  svg {
    display: block;
  }
`;

const Tree = styled.ul`
  flex: 1;
  min-height: 0;
  margin: 0 1px 1px 2px;
  padding: 1px 0 0 6px;
  border: 1px solid #828790;
  background: #fff;
  list-style: none;
  overflow: hidden;
`;

const Branch = styled.div`
  display: flex;
  align-items: center;
  height: 16px;
`;

const Dots = styled.i`
  width: 3px;
  margin: 0 1px;
  border-top: 1px dotted #808080;
`;

const Caption = styled.span`
  margin: 0 5px 0 4px;
`;

const Mono = styled.span`
  font-family: "DejaVu Sans Mono", "Noto Sans CJK SC", monospace;
  font-size: 10px;
`;

const NewTag = styled.b`
  align-self: flex-start;
  background: #ffe400;
  font: italic 700 8px/9px "DejaVu Sans", sans-serif;
`;

const Leaves = styled.ul`
  margin: 0 0 0 6px;
  padding: 0 0 0 19px;
  border-left: 1px dotted #808080;
  list-style: none;
`;

const Stem = styled.i`
  display: flex;
  align-items: center;
  width: 10px;
  height: 16px;
  border-left: 1px dotted #808080;

  &::after {
    content: "";
    width: 100%;
    border-top: 1px dotted #808080;
  }
`;

const Leaf = styled.li`
  display: flex;
  height: 16px;

  > span {
    display: flex;
    align-items: center;
    padding-right: 4px;
    background: ${(p) => (p.$selected ? "#d9d9d9" : "none")};
  }

  svg {
    margin-right: 5px;
  }

  &:last-child ${Stem} {
    height: 9px;
    align-items: flex-end;
  }
`;

const Work = styled.section`
  flex: 1;
  min-width: 0;
  display: flex;
  flex-direction: column;
  padding-left: 4px;
`;

const Canvas = styled.svg`
  flex: 1;
  min-height: 0;
  width: 100%;
  display: block;
`;

const AxisText = styled.text`
  font-family: "Liberation Sans", sans-serif;
  font-size: 12px;
  font-weight: ${(p) => (p.$bold ? 700 : 400)};
`;

const StatusBar = styled.footer`
  flex: none;
  display: flex;
  gap: 2px;
  height: 21px;
  padding-top: 1px;
  background: #fff;
`;

const Cell = styled.div`
  flex: ${(p) => (p.$width ? `0 0 ${p.$width}px` : "1")};
  display: flex;
  align-items: center;
  padding-left: 1px;
  border: 1px solid #d2d2d2;
  background: linear-gradient(#fdfdfd, #f2f2f2);
`;

const TaskBar = styled.div`
  flex: none;
  display: flex;
  height: 40px;
  background: #000c10;
  color: #fff;
`;

const Start = styled.button`
  display: flex;
  align-items: center;
  justify-content: center;
  width: 48px;
  background: #000;
`;

const Search = styled.label`
  display: flex;
  align-items: center;
  width: 344px;
  padding: 0 14px 0 9px;
  gap: 5px;
  background: #333;

  input {
    flex: 1;
    font-size: 14px;
  }

  input::placeholder {
    color: #a0a0a0;
    opacity: 1;
  }
`;

const TaskButton = styled.button`
  display: flex;
  flex-direction: column;
  align-items: center;
  width: 48px;
  margin-right: 2px;
  background: ${(p) => (p.$current ? "#34404a" : "none")};

  svg {
    margin: auto;
  }

  &::after {
    content: "";
    width: ${(p) => (p.$current ? 48 : 40)}px;
    height: 2px;
    background: ${(p) => (p.$running ? "#76b9ed" : "none")};
  }
`;

const Tray = styled.div`
  display: flex;
  margin-left: auto;
`;

const TrayCell = styled.div`
  display: flex;
  flex-wrap: wrap;
  align-content: center;
  align-items: center;
  justify-content: center;
  width: ${(p) => p.$width}px;
  text-align: center;
  white-space: normal;
`;

const Notice = styled.button`
  display: flex;
  align-items: center;
  justify-content: center;
  width: 54px;
  padding-right: 6px;
  border-right: 1px solid #555;
  margin-right: 3px;
  background: #000;
`;

/* floating input-method bar */
const Ime = styled.div`
  position: absolute;
  top: 83px;
  left: 613px;
  display: flex;
  align-items: center;
  color: #1f6fc8;

  svg {
    flex: none;
  }

  > svg {
    margin-right: -4px;
    z-index: 1;
  }

  > div {
    display: flex;
    align-items: center;
    justify-content: space-between;
    width: 183px;
    height: 23px;
    padding: 0 4px 0 8px;
    border: 1px solid #a4bcdc;
    background: #fff;
  }

  b {
    font-size: 15px;
  }
`;

const SogouText = styled.text`
  fill: #fff;
  font: 700 24px "Liberation Sans", sans-serif;
`;
